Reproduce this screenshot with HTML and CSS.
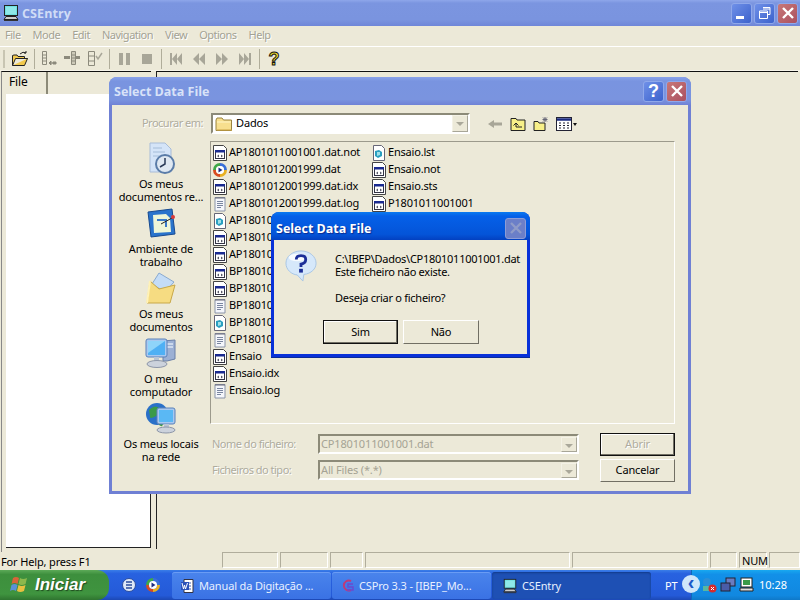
FILE: index.html
```html
<!DOCTYPE html>
<html lang="pt">
<head>
<meta charset="utf-8">
<title>CSEntry</title>
<link rel="stylesheet" href="styles.css">
</head>
<body>
<svg class="defs" width="0" height="0" aria-hidden="true">
  <symbol id="dat" viewBox="0 0 16 16">
    <path d="M1.500 .5h10l3 3v12h-13z" fill="#fff" stroke="#444"/>
    <rect x="3.500" y="5.500" width="9" height="8" fill="#fff" stroke="#334"/>
    <rect x="3" y="5" width="10" height="2.500" fill="#1a2a90"/>
    <path d="M5 11l2-1.500v3zM11 11l-2-1.500v3z" fill="#556"/>
  </symbol>
  <symbol id="log" viewBox="0 0 16 16">
    <path d="M3 1.500h10v13.500H3z" fill="#f4f6fb" stroke="#8a94a8"/>
    <path d="M4 1v2M6 1v2M8 1v2M10 1v2M12 1v2" stroke="#667"/>
    <path d="M5 5.500h6M5 7.500h6M5 9.500h6M5 11.500h4" stroke="#7a86a0"/>
  </symbol>
  <symbol id="blu" viewBox="0 0 16 16">
    <path d="M2.500 .5h8l3 3v12h-11z" fill="#fff" stroke="#667"/>
    <path d="M4 6l4-1 3 2v4l-4 2-3-2z" fill="#2a9fc0"/>
    <path d="M6 7l3 0v3l-3 1z" fill="#9fe0e8"/>
  </symbol>
  <symbol id="wmp" viewBox="0 0 16 16">
    <path d="M8 1a7 7 0 0 1 7 7h-3a4 4 0 0 0-4-4z" fill="#3a6fd8"/>
    <path d="M15 8a7 7 0 0 1-7 7v-3a4 4 0 0 0 4-4z" fill="#e8b020"/>
    <path d="M8 15a7 7 0 0 1-7-7h3a4 4 0 0 0 4 4z" fill="#d84a20"/>
    <path d="M1 8a7 7 0 0 1 7-7v3a4 4 0 0 0-4 4z" fill="#40a848"/>
    <circle cx="8" cy="8" r="4" fill="#fff"/>
    <path d="M6.500 5.500l4 2.500-4 2.500z" fill="#1c2c80"/>
  </symbol>
  <symbol id="folder" viewBox="0 0 18 16">
    <path d="M1 4l1-2h5l1.500 2h8v10.500H1z" fill="#f7df8e" stroke="#9a8440"/>
    <path d="M2 6h14" stroke="#fff6c8"/>
    <path d="M2 14h15" stroke="#c8a040"/>
  </symbol>
  <symbol id="computer" viewBox="0 0 18 18">
    <rect x="2.500" y="1.500" width="13" height="10" fill="#6fe0e0" stroke="#222"/>
    <path d="M4 3h10v7H4z" fill="#8fe8e8"/>
    <path d="M4 12.500h10l2 3H2z" fill="#ccc" stroke="#222"/>
    <path d="M2 16.500h14" stroke="#333"/>
  </symbol>
  <symbol id="monitor" viewBox="0 0 32 32">
    <path d="M18 4l12-1v19l-8 2H18z" fill="#9cb0d4" stroke="#6a80a8"/>
    <path d="M22 7h6M22 10h6" stroke="#dbe6f4" stroke-width="1.500"/>
    <rect x="1" y="2" width="21" height="18" rx="2" fill="#a8c8f0" stroke="#5a80b8"/>
    <rect x="3" y="4" width="17" height="14" fill="#4fb0f4"/>
    <path d="M3 4h17L3 16z" fill="#8fd4fa"/>
    <path d="M9 20h5v5H9z" fill="#b8c4d4"/>
    <ellipse cx="12" cy="27" rx="10" ry="3.500" fill="#ccd2dc" stroke="#8d96a8"/>
  </symbol>
</svg>

<header class="app-title">
  <svg class="app-icon"><use href="#computer"/></svg>
  <span class="app-name">CSEntry</span>
  <span class="wbtns">
    <span class="wbtn"><span class="min-bar"></span></span>
    <span class="wbtn"><svg class="wglyph" viewBox="0 0 14 14"><path d="M5 1.500h7v7h-2M1.500 5h8v7.500h-8zM1.500 6.500h8M5 3h7" fill="none" stroke="#fff"/></svg></span>
    <span class="wbtn wbtn-close"><svg class="wglyph" viewBox="0 0 14 14"><path d="M2 2l10 10M12 2L2 12" stroke="#fff" stroke-width="2.400"/></svg></span>
  </span>
</header>
<nav class="menubar">
  <span>File</span><span>Mode</span><span>Edit</span><span>Navigation</span><span>View</span><span>Options</span><span>Help</span>
</nav>
<div class="toolbar">
  <span class="grip"></span>
  <svg class="tb" viewBox="0 0 18 18"><path d="M1.500 5.500v10h12l3-7h-3v-2H7l-1-1.500H3zM1.500 15.500l3-7h12" fill="#f2c94c" stroke="#222"/><path d="M9 4q3-3 6-1M15 3v-2M15 3l-2 0" fill="none" stroke="#222"/></svg>
  <span class="sep"></span>
  <svg class="tb" viewBox="0 0 18 18"><path d="M2.500 1.500h4v13h-4zM2.500 5h4M2.500 8h4M2.500 11h4" fill="none" stroke="#8c8a7c"/><path d="M9 13h7M9 13l2-2v4zM13 12h3v2h-3z" fill="#8c8a7c" stroke="#8c8a7c"/></svg>
  <svg class="tb" viewBox="0 0 18 18"><path d="M8.500 1.500h4v13h-4zM8.500 5h4M8.500 8h4M8.500 11h4" fill="#ccc9b8" stroke="#8c8a7c"/><path d="M1 6h6v3H1zM13 6h4v3h-4z" fill="#8c8a7c"/></svg>
  <svg class="tb" viewBox="0 0 18 18"><path d="M2.500 1.500h6v14h-6zM2.500 6h6M2.500 11h6" fill="none" stroke="#8c8a7c"/><path d="M10 6l2 3 4-6" fill="none" stroke="#a8a698" stroke-width="1.500"/></svg>
  <span class="sep"></span>
  <svg class="tb" viewBox="0 0 18 18"><path d="M4 3h4v12H4zM11 3h4v12h-4z" fill="#a8a698"/></svg>
  <svg class="tb" viewBox="0 0 18 18"><path d="M4 4h10v10H4z" fill="#a8a698"/></svg>
  <span class="sep"></span>
  <svg class="tb" viewBox="0 0 18 18"><path d="M3 3h2v12H3zM10 3v12L5 9zM15 3v12l-5-6z" fill="#a8a698"/></svg>
  <svg class="tb" viewBox="0 0 18 18"><path d="M9 3v12L3 9zM15 3v12L9 9z" fill="#a8a698"/></svg>
  <svg class="tb" viewBox="0 0 18 18"><path d="M3 3v12l6-6zM9 3v12l6-6z" fill="#a8a698"/></svg>
  <svg class="tb" viewBox="0 0 18 18"><path d="M3 3v12l5-6zM8 3v12l5-6zM13 3h2v12h-2z" fill="#a8a698"/></svg>
  <span class="sep"></span>
  <span class="tb-help">?</span>
</div>
<main class="workspace">
  <section class="tree-pane">
    <div class="tab">File</div>
    <div class="tree-body"></div>
  </section>
  <section class="doc-pane"></section>
</main>
<footer class="statusbar">
  <span class="status-text">For Help, press F1</span>
  <span class="pane p1"></span><span class="pane p2"></span><span class="pane p3"></span><span class="pane p4"></span><span class="pane p5"></span><span class="pane p6"></span><span class="pane p7">NUM</span><span class="pane p8"></span>
</footer>
<footer class="taskbar">
  <div class="start">
    <svg class="flag" viewBox="0 0 20 20"><path d="M3 3q3-2 6 0L7.500 9q-3-2-6 0z" fill="#d8643a"/><path d="M10 3q3 2 7 0l-1.500 6q-4 2-7 0z" fill="#8cb84c"/><path d="M1.500 10q3-2 6 0L6 16q-3-2-6 0z" fill="#5a90d8"/><path d="M8.500 10q3 2 7 0L14 16q-4 2-7 0z" fill="#e8c040"/></svg>
    <span class="start-label">Iniciar</span>
  </div>
  <div class="quick">
    <svg class="ql" viewBox="0 0 16 16"><circle cx="8" cy="8" r="6.500" fill="#dfe9f7" stroke="#2a4c9c"/><path d="M5 5h6M5 8h6M5 11h6" stroke="#2a4c9c" stroke-width="1.500"/></svg>
    <svg class="ql"><use href="#wmp"/></svg>
  </div>
  <div class="task">
    <svg class="task-ic" viewBox="0 0 16 16"><path d="M4 1.500h9v13H4z" fill="#fff" stroke="#334"/><path d="M6 5h5M6 8h5M6 11h5" stroke="#3a5ab0"/><rect x="1" y="4" width="8" height="8" fill="#2a50b8"/><path d="M2 5l1.500 6 1-4 1 4L7.500 5" fill="none" stroke="#fff"/></svg>
    <span class="task-label">Manual da Digitação ...</span>
  </div>
  <div class="task">
    <svg class="task-ic" viewBox="0 0 16 16"><path d="M11 3a5 5 0 1 0 0 9" fill="none" stroke="#c03a78" stroke-width="2"/><path d="M13 6H8v3h5v3H7" fill="none" stroke="#6a4ad0" stroke-width="1.500"/></svg>
    <span class="task-label">CSPro 3.3 - [IBEP_Mo...</span>
  </div>
  <div class="task task-active">
    <svg class="task-ic"><use href="#computer"/></svg>
    <span class="task-label">CSEntry</span>
  </div>
  <span class="lang">PT</span>
  <div class="tray">
    <span class="chev">‹</span>
    <svg class="tray-ic" viewBox="0 0 16 16"><circle cx="6" cy="5" r="4" fill="#2a8fd8"/><path d="M2 9h8v5H2z" fill="#58b8a0"/><circle cx="11.500" cy="11.500" r="4" fill="#d82a2a"/><path d="M10 10l3 3M13 10l-3 3" stroke="#fff"/></svg>
    <svg class="tray-ic" viewBox="0 0 16 16"><rect x="6" y="1" width="9" height="8" fill="#6a7cc0" stroke="#223"/><rect x="1" y="6" width="9" height="8" fill="#4a5ca8" stroke="#223"/></svg>
    <svg class="tray-ic" viewBox="0 0 16 16"><rect x="2" y="1" width="11" height="9" fill="#fff" stroke="#222"/><rect x="4" y="3" width="7" height="5" fill="#3a9a48"/><path d="M1 11h13v3H1z" fill="#ddd" stroke="#222"/></svg>
    <span class="clock">10:28</span>
  </div>
</footer>

<div class="dialog file-dialog">
  <div class="dlg-title">
    <span class="dlg-title-text">Select Data File</span>
    <span class="wbtns">
      <span class="wbtn wbtn-help">?</span>
      <span class="wbtn wbtn-close"><svg class="wglyph" viewBox="0 0 14 14"><path d="M2 2l10 10M12 2L2 12" stroke="#fff" stroke-width="2.400"/></svg></span>
    </span>
  </div>
  <div class="dlg-content">
    <div class="look-row">
      <span class="look-label muted">Procurar em:</span>
      <div class="combo look-combo">
        <svg class="ic-folder"><use href="#folder"/></svg>
        <span class="combo-val">Dados</span>
        <span class="combo-arrow"></span>
      </div>
      <div class="fd-tools">
        <svg class="fd-tool" viewBox="0 0 16 16"><path d="M1 8l6-4v2.500h8v3H7V12z" fill="#a8a698"/></svg>
        <svg class="fd-tool" viewBox="0 0 16 16"><path d="M1 2.500h5l1 1.500h8v10.500H1z" fill="#f8f088" stroke="#222"/><path d="M6 7l-2.500 2.500M6 7l2.500 2.500M6 7v4h6" fill="none" stroke="#222"/></svg>
        <svg class="fd-tool" viewBox="0 0 16 16"><path d="M1 5.500h4l1 1.500h6v7.500H1z" fill="#f8f088" stroke="#222"/><path d="M12 1v5M9.500 3.500h5M10 1.500l4 4M14 1.500l-4 4" stroke="#667"/></svg>
        <svg class="fd-tool fd-view" viewBox="0 0 22 16"><rect x=".5" y="1.500" width="15" height="13" fill="#fff" stroke="#223"/><path d="M1 3.500h14" stroke="#1a2a80" stroke-width="2.500"/><path d="M3 7h2M7 7h2M11 7h2M3 9.500h2M7 9.500h2M11 9.500h2M3 12h2M7 12h2M11 12h2" stroke="#223"/><path d="M17 7h4l-2 3z" fill="#111"/></svg>
      </div>
    </div>
    <div class="lower">
      <aside class="places">
        <div class="place">
          <svg class="place-ic" viewBox="0 0 32 32"><path d="M5 1h15l6 6v23H5z" fill="#d4e4f8" stroke="#a8bcd8"/><path d="M8 6h9M8 10h12M8 14h7" stroke="#a4bcd8"/><circle cx="20" cy="22" r="9" fill="#dfe8f2" stroke="#5a7ca8" stroke-width="2"/><path d="M20 16v6l-5 3" fill="none" stroke="#2a3a58" stroke-width="1.500"/></svg>
          <span>Os meus<br>documentos re...</span>
        </div>
        <div class="place">
          <svg class="place-ic" viewBox="0 0 32 32"><path d="M3 5l24-3 3 25-24 3z" fill="#2a74cc" stroke="#174a90"/><path d="M8 8l13-1 4 4 1 14L9 26z" fill="#eef6d8"/><path d="M12 13h9v7" fill="none" stroke="#3a7ac8" stroke-width="2"/><path d="M16 17l11-6" stroke="#222"/><circle cx="28" cy="10" r="2" fill="#d83a3a"/></svg>
          <span>Ambiente de<br>trabalho</span>
        </div>
        <div class="place">
          <svg class="place-ic" viewBox="0 0 32 32"><path d="M14 1l15 9-9 10-13-8z" fill="#c4dcf6" stroke="#8aaad0"/><path d="M5 9l9 8 16-4-5 18H2z" fill="#f6dc82" stroke="#c8a848"/><path d="M5 9L2 31" stroke="#fff2b8" stroke-width="2"/></svg>
          <span>Os meus<br>documentos</span>
        </div>
        <div class="place">
          <svg class="place-ic"><use href="#monitor"/></svg>
          <span>O meu<br>computador</span>
        </div>
        <div class="place">
          <svg class="place-ic" viewBox="0 0 32 32"><circle cx="12" cy="12" r="11" fill="#2a70c8"/><path d="M4 8q6-6 10-2t-3 8-6 0zM14 16q4 0 4 5t-4 2z" fill="#3a9a48"/><rect x="12" y="6" width="18" height="16" rx="2" fill="#a8c8f0" stroke="#5a80b8"/><rect x="14" y="8" width="14" height="12" fill="#5ab8f4"/><path d="M19 22h5v4h-5z" fill="#b8c4d4"/><ellipse cx="21" cy="28" rx="9" ry="3" fill="#ccd2dc" stroke="#8d96a8"/></svg>
          <span>Os meus locais<br>na rede</span>
        </div>
      </aside>
      <div class="fd-main">
        <div class="filelist">
          <ul class="filecol col-a">
            <li><svg class="fi"><use href="#dat"/></svg><span class="fn">AP1801011001001.dat.not</span></li>
            <li><svg class="fi"><use href="#wmp"/></svg><span class="fn">AP1801012001999.dat</span></li>
            <li><svg class="fi"><use href="#dat"/></svg><span class="fn">AP1801012001999.dat.idx</span></li>
            <li><svg class="fi"><use href="#log"/></svg><span class="fn">AP1801012001999.dat.log</span></li>
            <li><svg class="fi"><use href="#blu"/></svg><span class="fn">AP18010</span></li>
            <li><svg class="fi"><use href="#dat"/></svg><span class="fn">AP18010</span></li>
            <li><svg class="fi"><use href="#dat"/></svg><span class="fn">AP18010</span></li>
            <li><svg class="fi"><use href="#dat"/></svg><span class="fn">BP18010</span></li>
            <li><svg class="fi"><use href="#dat"/></svg><span class="fn">BP18010</span></li>
            <li><svg class="fi"><use href="#log"/></svg><span class="fn">BP18010</span></li>
            <li><svg class="fi"><use href="#blu"/></svg><span class="fn">BP18010</span></li>
            <li><svg class="fi"><use href="#log"/></svg><span class="fn">CP18010</span></li>
            <li><svg class="fi"><use href="#dat"/></svg><span class="fn">Ensaio</span></li>
            <li><svg class="fi"><use href="#dat"/></svg><span class="fn">Ensaio.idx</span></li>
            <li><svg class="fi"><use href="#log"/></svg><span class="fn">Ensaio.log</span></li>
          </ul>
          <ul class="filecol">
            <li><svg class="fi"><use href="#blu"/></svg><span class="fn">Ensaio.lst</span></li>
            <li><svg class="fi"><use href="#dat"/></svg><span class="fn">Ensaio.not</span></li>
            <li><svg class="fi"><use href="#dat"/></svg><span class="fn">Ensaio.sts</span></li>
            <li><svg class="fi"><use href="#dat"/></svg><span class="fn">P1801011001001</span></li>
          </ul>
        </div>
        <div class="form-rows">
          <span class="muted">Nome do ficheiro:</span>
          <div class="combo form-combo disabled"><span class="combo-val">CP1801011001001.dat</span><span class="combo-arrow"></span></div>
          <button class="btn btn-default muted" type="button">Abrir</button>
          <span class="muted">Ficheiros do tipo:</span>
          <div class="combo form-combo disabled"><span class="combo-val">All Files (*.*)</span><span class="combo-arrow"></span></div>
          <button class="btn" type="button">Cancelar</button>
        </div>
      </div>
    </div>
  </div>
</div>

<div class="dialog msg-dialog">
  <div class="dlg-title">
    <span class="dlg-title-text">Select Data File</span>
    <span class="wbtns"><span class="wbtn wbtn-disabled"><svg class="wglyph" viewBox="0 0 14 14"><path d="M2 2l10 10M12 2L2 12" stroke="#8f9cc8" stroke-width="2.400"/></svg></span></span>
  </div>
  <div class="msg-body">
    <div class="msg-main">
      <svg class="msg-ic" viewBox="0 0 34 34"><path d="M17 1C8 1 1 7 1 14s6 12 12 12.500L19 33l1-7c8-1 13-6 13-12C33 7 26 1 17 1z" fill="#d6e8fa" stroke="#a6c4e4"/><ellipse cx="13" cy="8" rx="9" ry="4" fill="#fff" opacity=".8"/><path d="M12 10q0-4 5-4t5 4-5 5v3" fill="none" stroke="#1a2e98" stroke-width="3"/><rect x="15" y="20" width="4" height="4" fill="#1a2e98"/></svg>
      <div class="msg-text">
        <p>C:\IBEP\Dados\CP1801011001001.dat<br>Este ficheiro não existe.</p>
        <p>Deseja criar o ficheiro?</p>
      </div>
    </div>
    <div class="msg-btns">
      <button class="btn btn-default" type="button">Sim</button>
      <button class="btn btn-no" type="button">Não</button>
    </div>
  </div>
</div>
</body>
</html>
```
FILE: styles.css
```css
* { box-sizing: border-box; }
html, body { margin: 0; height: 100%; }
body {
  position: relative;
  width: 800px;
  height: 600px;
  overflow: hidden;
  display: flex;
  flex-direction: column;
  background: #ece9d8;
  font: 11px/12px "Noto Sans", sans-serif;
  letter-spacing: -.15px;
  color: #000;
}
.defs { position: absolute; }
svg { display: block; flex: none; }
ul { list-style: none; margin: 0; padding: 0; }
p { margin: 0; }

.app-title {
  height: 26px;
  flex: none;
  display: flex;
  align-items: center;
  padding: 0 2px 0 2px;
  background: linear-gradient(180deg, #8ea6ea 0, #7b95e0 12%, #7a94df 75%, #6f86d8 100%);
}
.app-icon { width: 18px; height: 18px; margin-right: 2px; }
.app-name { font: bold 12.500px "Open Sans", sans-serif; color: #d0dcf6; letter-spacing: .1px; }
.wbtns { margin-left: auto; display: flex; gap: 2px; }
.wbtn {
  width: 21px; height: 21px;
  border: 1px solid #8fa8ea;
  border-radius: 3px;
  background: linear-gradient(135deg, #6f90e8, #3c62cc);
  display: flex; align-items: center; justify-content: center;
  color: #fff;
  position: relative;
}
.wbtn-close { background: linear-gradient(135deg, #c87878, #aa5060); }
.wbtn-help { font: bold 18px "Liberation Sans", sans-serif; }
.wbtn-disabled { background: #6b7fc8; border-color: #8d9cd6; }
.wglyph { width: 14px; height: 14px; }
.min-bar { width: 8px; height: 3px; background: #fff; margin: 8px 4px 0 0; }

.menubar {
  height: 20px;
  flex: none;
  display: flex;
  align-items: center;
  gap: 12px;
  padding: 0 0 2px 5px;
  color: #a3a294;
  letter-spacing: -.5px;
  text-shadow: 1px 1px 0 #fff;
}
.toolbar {
  height: 25px;
  flex: none;
  display: flex;
  align-items: center;
  gap: 5px;
  padding: 0 0 0 3px;
  border-top: 1px solid #fff;
  box-shadow: inset 0 -1px 0 #f6f4ea;
}
.grip { width: 2px; height: 18px; background: #c8c5b2; margin-right: 1px; }
.tb { width: 18px; height: 18px; }
.sep { width: 1px; height: 20px; background: #b0ad9a; }
.tb-help { width: 18px; font: bold 18px/18px "Liberation Sans", sans-serif; color: #f0dc30; text-align: center; -webkit-text-stroke: 1px #111; }

.workspace { flex: 1; min-height: 0; display: flex; padding: 0 2px 0 1px; gap: 5px; }
.tree-pane {
  width: 150px;
  border-top: 1px solid #111;
  border-left: 1px solid #888;
  display: flex;
  flex-direction: column;
  padding-bottom: 4px;
}
.tab {
  width: 46px; height: 22px;
  flex: none;
  padding: 4px 0 0 7px;
  font-size: 12px;
  border-right: 2px solid #8c8a78;
}
.tree-body { flex: 1; margin-left: 4px; background: #fff; border-right: 1px solid #222; border-bottom: 1px solid #222; }
.doc-pane { flex: 1; border-top: 1px solid #111; border-left: 1px solid #222; margin-bottom: 3px; }

.statusbar {
  height: 18px;
  flex: none;
  display: flex;
  padding-top: 0;
  gap: 2px;
}
.status-text { width: 220px; padding: 4px 0 0 1px; }
.pane { border: 1px solid; border-color: #b0ad9c #fff #fff #b0ad9c; height: 16px; padding: 2px 0 0 2px; }
.p1 { width: 56px; } .p2 { width: 48px; } .p3 { width: 33px; } .p4 { width: 205px; }
.p5 { width: 136px; } .p6 { width: 27px; } .p7 { width: 28px; } .p8 { flex: 1; }

.taskbar {
  height: 30px;
  flex: none;
  display: flex;
  align-items: stretch;
  background: linear-gradient(180deg, #3a7ee8 0, #2862e0 12%, #245ad8 85%, #1c48b4 100%);
  color: #fff;
}
.start {
  width: 109px;
  display: flex;
  align-items: center;
  gap: 5px;
  padding-left: 10px;
  border-radius: 0 12px 12px 0;
  background: linear-gradient(180deg, #5caa58 0, #3d8f3d 15%, #3f943f 80%, #2f7430 100%);
}
.flag { width: 20px; height: 20px; }
.start-label { font: italic bold 17px "Liberation Sans", sans-serif; letter-spacing: 0; text-shadow: 1px 1px 1px #1f4a1f; }
.quick { width: 63px; display: flex; align-items: center; gap: 8px; padding-left: 12px; }
.ql { width: 16px; height: 16px; }
.task {
  width: 159px;
  margin: 2px 1px 1px 0;
  display: flex;
  align-items: center;
  gap: 3px;
  padding-left: 8px;
  border-radius: 3px;
  background: linear-gradient(180deg, #4a84ec, #3a72e4);
  box-shadow: inset 0 1px 0 #6a9cf4;
  white-space: nowrap;
  color: #e8f0ff;
}
.task-active { background: #1e50b4; box-shadow: inset 0 1px 2px #123a8a; padding-left: 10px; gap: 4px; }
.task-ic { width: 16px; height: 16px; }
.lang { width: 39px; padding: 10px 0 0 13px; }
.tray {
  flex: 1;
  display: flex;
  align-items: center;
  position: relative;
  background: linear-gradient(180deg, #18a8f0 0, #1290e8 15%, #1188e0 85%, #0f78c8 100%);
  border-left: 1px solid #0f68b8;
  padding-left: 9px;
  gap: 3px;
}
.chev {
  position: absolute;
  left: -10px; top: 5px;
  width: 18px; height: 18px;
  border-radius: 50%;
  background: #cfe6fa;
  color: #1c58c8;
  font: bold 20px/14px "Liberation Sans", sans-serif;
  text-align: center;
}
.tray-ic { width: 16px; height: 16px; }
.clock { margin-left: 1px; letter-spacing: 0; }

.dialog {
  position: absolute;
  display: flex;
  flex-direction: column;
  border-radius: 8px 8px 0 0;
}
.file-dialog {
  left: 109px; top: 77px;
  width: 582px; height: 417px;
  background: #6f80d4;
  padding: 0 3px 3px;
}
.msg-dialog {
  left: 271px; top: 212px;
  width: 259px; height: 146px;
  background: #0831d9;
  padding: 0 3px 3px;
  border-bottom: 1px solid #0a2a98;
}
.dlg-title {
  height: 28px;
  flex: none;
  display: flex;
  align-items: center;
  margin: 0 -3px;
  padding-left: 5px;
  padding-right: 4px;
  border-radius: 8px 8px 0 0;
  background: linear-gradient(180deg, #8aa2ea 0, #7994e0 15%, #7a94df 80%, #6f82d6 100%);
}
.msg-dialog .dlg-title {
  padding-top: 4px;
  background: linear-gradient(180deg, #0a7af0 0, #0560e8 15%, #0454d8 80%, #0340c0 100%);
}
.dlg-title-text { font: bold 12.500px "Open Sans", sans-serif; color: #d8e2f8; letter-spacing: 0; }
.msg-dialog .dlg-title-text { color: #fff; text-shadow: 1px 1px 1px #0a2a90; }
.dlg-content, .msg-body { flex: 1; min-height: 0; background: #ece9d8; display: flex; flex-direction: column; }

.muted { color: #aeac9e; letter-spacing: -.5px; text-shadow: 1px 1px 0 #fff; }
.look-row { display: flex; align-items: center; gap: 8px; margin-top: 8px; height: 21px; flex: none; }
.look-label { width: 91px; text-align: right; padding-bottom: 2px; }
.combo {
  display: flex;
  align-items: center;
  background: #fff;
  border: 2px solid;
  border-color: #8c8a78 #fff #fff #8c8a78;
  position: relative;
}
.look-combo { width: 259px; height: 21px; padding-left: 2px; gap: 3px; }
.look-combo .combo-val { padding-bottom: 2px; }
.ic-folder { width: 18px; height: 16px; }
.combo-arrow {
  margin-left: auto;
  width: 16px;
  height: 17px;
  background: #ece9d8;
  border: 1px solid #a8a698;
  border-top-color: #f4f2e6;
  border-left-color: #f4f2e6;
  position: relative;
}
.combo-arrow::after {
  content: "";
  position: absolute;
  left: 3px; top: 6px;
  border: 4px solid transparent;
  border-top: 4px solid #aaa89a;
  border-bottom: 0;
}
.fd-tools { display: flex; align-items: center; gap: 7px; margin-left: 9px; }
.fd-tool { width: 16px; height: 16px; }
.fd-view { width: 22px; }

.lower { flex: 1; min-height: 0; display: flex; margin-top: 7px; }
.places { width: 98px; flex: none; display: flex; flex-direction: column; }
.place { height: 65px; display: flex; flex-direction: column; align-items: center; text-align: center; line-height: 13px; }
.place:first-child { margin-top: 1px; }
.place-ic { width: 32px; height: 32px; margin-bottom: 3px; }
.place span { width: 96px; }

.fd-main { width: 465px; display: flex; flex-direction: column; }
.filelist {
  height: 283px;
  flex: none;
  display: flex;
  padding: 2px 2px 2px 1px;
  border: 1px solid;
  border-color: #9c9a8c #fff #fff #9c9a8c;
}
.filecol { display: flex; flex-direction: column; }
.col-a { width: 159px; }
.filecol li { height: 17px; display: flex; align-items: center; gap: 1px; white-space: nowrap; }
.fn { padding-bottom: 2px; letter-spacing: -.2px; }
.fi { width: 16px; height: 16px; }

.form-rows {
  margin-top: 10px;
  display: grid;
  grid-template-columns: 106px 261px 75px;
  grid-template-rows: 20px 22px;
  row-gap: 5px;
  justify-content: start;
  align-items: center;
  padding-left: 2px;
}
.form-combo { height: 20px; background: #ece9d8; padding-left: 1px; color: #a5a394; }
.form-combo .combo-arrow { height: 15px; }
.btn {
  font: inherit;
  letter-spacing: inherit;
  color: #000;
  margin-left: 21px;
  width: 75px; height: 23px;
  background: #ece9d8;
  border: 1px solid;
  border-color: #fff #716f64 #716f64 #fff;
  padding: 0;
}
.btn.muted { color: #aeac9e; letter-spacing: -.15px; }
.btn-default { outline: 1px solid #111; outline-offset: -1px; box-shadow: inset -1px -1px 0 #716f64, inset 1px 1px 0 #fff; }

.msg-main { display: flex; padding: 10px 0 0 11px; gap: 18px; }
.msg-ic { width: 32px; height: 32px; }
.msg-text { display: flex; flex-direction: column; gap: 13px; line-height: 13px; margin-top: 2px; letter-spacing: -.27px; }
.msg-btns { display: flex; gap: 5px; margin-top: 16px; padding-left: 49px; }
.msg-btns .btn { margin-left: 0; height: 24px; }
.msg-btns .btn-no { width: 76px; }
```
